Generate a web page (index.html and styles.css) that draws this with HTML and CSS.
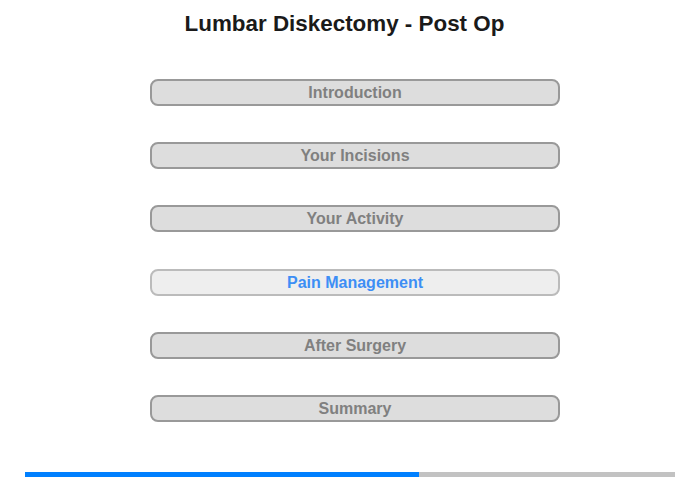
FILE: index.html
```html
<!DOCTYPE html>
<html lang="en">
<head>
    <meta charset="UTF-8">
    <meta name="viewport" content="width=device-width, initial-scale=1.0">
    <title>Lumbar Diskectomy - Post Op</title>
    <link rel="stylesheet" href="styles.css">
</head>
<body>
    <div class="page">
        <h1 class="title">Lumbar Diskectomy - Post Op</h1>

        <!-- Chapter menu -->
        <div class="menu">
            <button class="chapter">Introduction</button>
            <button class="chapter">Your Incisions</button>
            <button class="chapter">Your Activity</button>
            <button class="chapter current">Pain Management</button>
            <button class="chapter">After Surgery</button>
            <button class="chapter">Summary</button>
        </div>

        <div class="progress">
            <div class="progress-fill" style="width: 60.6%"></div>
        </div>
    </div>
</body>
</html>
```

FILE: styles.css
```css
body {
    font-family: Arial, "Liberation Sans", sans-serif;
    margin: 0;
    background-color: white;
}
.page {
    width: 700px;
    height: 480px;
    padding-top: 11px;
    box-sizing: border-box;
}
.title {
    font-size: 22.4px;
    line-height: 25px;
    font-weight: bold;
    color: #1a1a1a;
    text-align: center;
    margin: 0 11px 43px 0;
}
.menu {
    display: flex;
    flex-direction: column;
    gap: 36.2px;
    margin-left: 150px;
    width: 410px;
}
.chapter {
    height: 27px;
    padding: 0;
    font-family: Arial, "Liberation Sans", sans-serif;
    font-size: 16px;
    line-height: 23px;
    font-weight: bold;
    color: #808080;
    background-color: #dddddd;
    border: 2px solid #999999;
    border-radius: 8px;
    cursor: pointer;
}
.chapter.current {
    color: #3d8ef5;
    background-color: #eeeeee;
    border-color: #bbbbbb;
}
.progress {
    margin: 50px 0 0 25px;
    width: 650px;
    height: 5px;
    background-color: #c2c2c2;
}
.progress-fill {
    height: 100%;
    background-color: #0080ff;
}
```
